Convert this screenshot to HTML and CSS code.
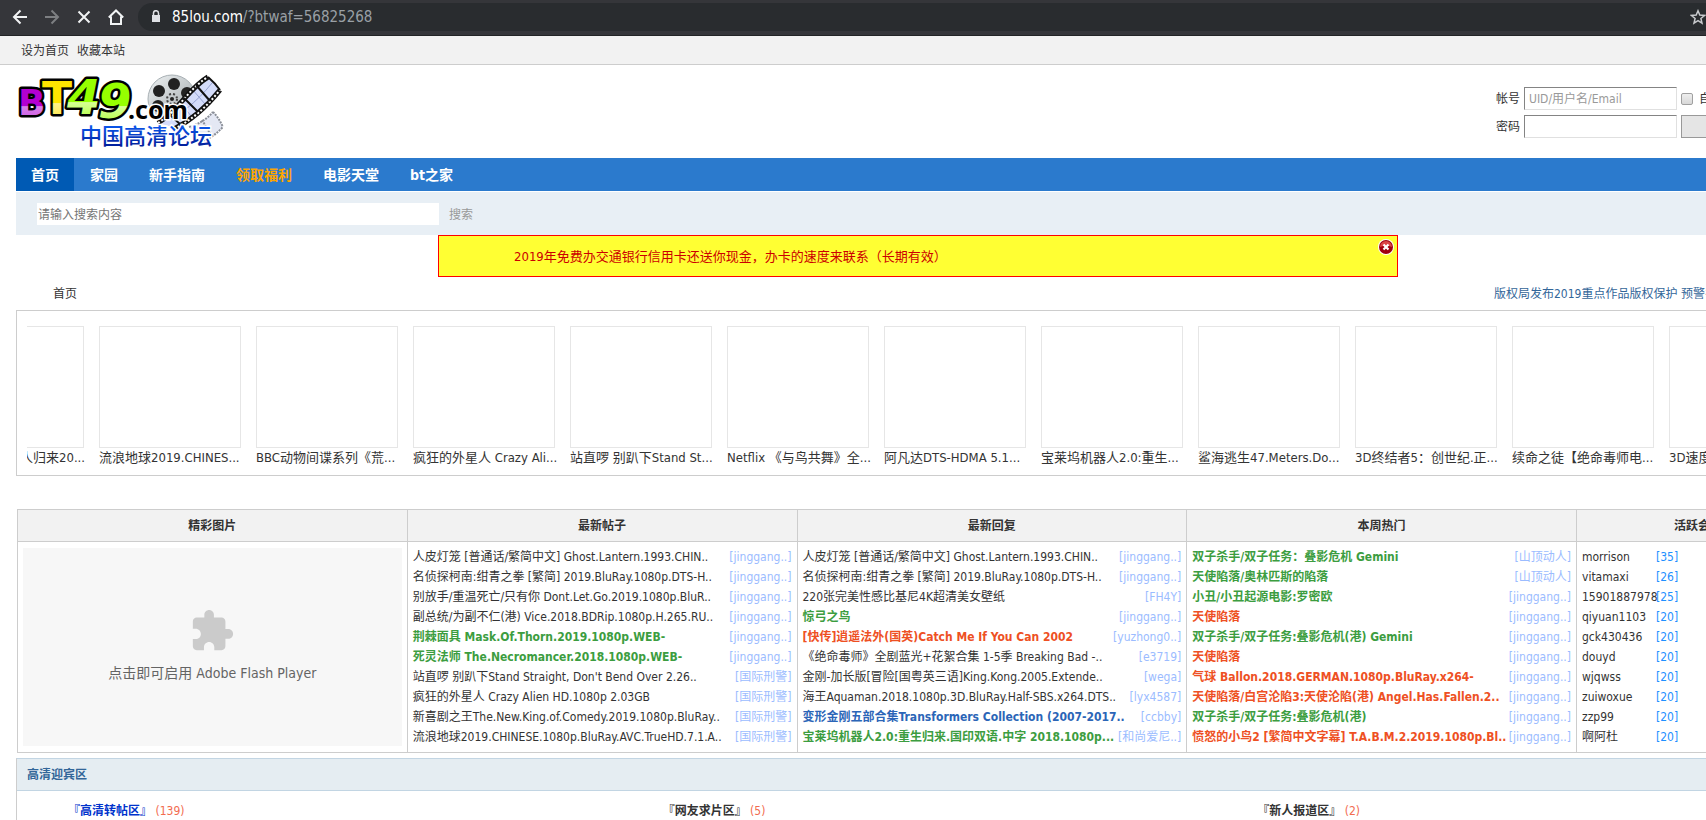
FILE: index.html
```html
<!doctype html>
<html lang="zh-CN">
<head>
  <meta charset="utf-8">
  <meta name="viewport" content="width=device-width, initial-scale=1">
  <title>BT49 中国高清论坛</title>
  <link rel="stylesheet" href="styles.css">
</head>
<body>

<div class="browser">
  <button class="browser-btn" aria-label="后退">
    <svg width="16" height="16" viewBox="0 0 16 16"><path d="M15 8H2M8.500 1.500 2 8l6.500 6.500"/></svg>
  </button>
  <button class="browser-btn is-off" aria-label="前进">
    <svg width="16" height="16" viewBox="0 0 16 16"><path d="M1 8h13M7.500 1.500 14 8l-6.500 6.500"/></svg>
  </button>
  <button class="browser-btn" aria-label="停止">
    <svg width="16" height="16" viewBox="0 0 16 16"><path d="M2.500 2.500l11 11M13.500 2.500l-11 11"/></svg>
  </button>
  <button class="browser-btn" aria-label="主页">
    <svg width="16" height="16" viewBox="0 0 16 16"><path d="M.8 8.500 8 1.500l7.200 7M3 7.500V15h10V7.500"/></svg>
  </button>
  <div class="address">
    <svg class="lock" width="10" height="13" viewBox="0 0 10 13"><path d="M1 5h8v7H1z"/><path class="lock-bow" d="M2.500 5V3.200a2.500 2.500 0 0 1 5 0V5"/></svg>
    <span class="address-host">85lou.com</span><span class="address-path">/?btwaf=56825268</span>
    <button class="star" aria-label="收藏">
      <svg width="16" height="16" viewBox="0 0 16 16"><path d="M8 1.800l1.800 4.300 4.700.4-3.600 3 1.100 4.600L8 11.700l-4 2.400 1.100-4.600-3.600-3 4.700-.4z"/></svg>
    </button>
  </div>
</div>

<div class="page">

  <div class="toptb">
    <a href="#">设为首页</a>
    <a href="#">收藏本站</a>
  </div>

  <div class="wp">

    <div class="hdc">
      <a href="#" class="logo" aria-label="BT49.com 中国高清论坛">
        <svg width="214" height="78" viewBox="0 0 214 78">
          <defs>
            <linearGradient id="gp" x1="0" y1="0" x2="0" y2="1"><stop offset=".58" stop-color="#b400d2"/><stop offset=".6" stop-color="#d880ea"/><stop offset="1" stop-color="#c850e0"/></linearGradient>
            <linearGradient id="gy" x1="0" y1="0" x2="0" y2="1"><stop offset=".58" stop-color="#ffe400"/><stop offset=".6" stop-color="#fff28c"/><stop offset="1" stop-color="#ffe632"/></linearGradient>
            <linearGradient id="gg" x1="0" y1="0" x2="0" y2="1"><stop offset=".58" stop-color="#96ff00"/><stop offset=".6" stop-color="#d8ff96"/><stop offset="1" stop-color="#a4ff28"/></linearGradient>
            <linearGradient id="gb" x1="0" y1="0" x2="0" y2="1"><stop offset=".2" stop-color="#0a5af0"/><stop offset="1" stop-color="#00148c"/></linearGradient>
            <linearGradient id="reel" x1="0" y1="0" x2="1" y2="1"><stop offset="0" stop-color="#f0f3f4"/><stop offset="1" stop-color="#98a0a4"/></linearGradient>
          </defs>
          <circle cx="156" cy="28" r="24" fill="url(#reel)" stroke="#a8b0b4"/>
          <g fill="#222">
            <circle cx="158" cy="13" r="6"/><circle cx="143" cy="20" r="6"/><circle cx="142" cy="35" r="6"/><circle cx="171" cy="22" r="6"/><circle cx="155" cy="43" r="6"/><circle cx="156" cy="28" r="2"/>
          </g>
          <circle cx="156" cy="28" r="5" fill="none" stroke="#444" stroke-width="2" stroke-dasharray="2 2"/>
          <path d="M142 52C164 38 172 18 192 6q7 6 11 14c-10 14-24 27-43 37z" fill="#d4dcfa"/>
          <path d="M164 31l11 14M176 18l13 15M170 38c10-8 18-16 26-26" fill="none" stroke="#98a4d4"/>
          <path d="M142 52C164 38 172 18 192 6M158 58c20-10 34-24 46-39" fill="none" stroke="#111" stroke-width="5"/>
          <path d="M142 52C164 38 172 18 192 6M158 58c20-10 34-24 46-39" fill="none" stroke="#fff" stroke-width="2" stroke-dasharray="2 2"/>
          <path d="M154 44l11 10M168 27l14 14M180 14l14 16M192 6q7 6 12 13" fill="none" stroke="#111" stroke-width="2"/>
          <path d="M173 56c10-3 18-8 24-15q6 6 10 15c-6 6-13 12-22 15z" fill="#e4e8f4"/>
          <path d="M173 56c10-3 18-8 24-15M185 71c9-3 16-9 22-15M197 41q6 6 10 15M186 49l9 15" fill="none" stroke="#8a8f98" stroke-width="2" stroke-dasharray="2 1"/>
          <g class="logo-bt">
            <text x="2" y="44" font-size="36" fill="url(#gp)">B</text>
            <text x="26" y="43" font-size="44" fill="url(#gy)">T</text>
            <g class="logo-num">
              <text x="51" y="43" font-size="48" fill="url(#gg)">4</text>
              <text x="82" y="47" font-size="48" fill="url(#gg)">9</text>
            </g>
          </g>
          <text class="logo-com" x="112" y="48">.com</text>
          <text class="logo-cn" x="64" y="73">中国高清论坛</text>
        </svg>
      </a>

      <form class="login">
        <label for="ls_username">帐号</label>
        <input type="text" id="ls_username" class="px" placeholder="UID/用户名/Email">
        <div class="login-extra">
          <input type="checkbox" id="ls_cookie" class="pc"><label for="ls_cookie">自动登录</label>
        </div>
        <label for="ls_password">密码</label>
        <input type="password" id="ls_password" class="px">
        <button type="button" class="pn">登录</button>
      </form>
    </div>

    <nav class="nv">
      <a href="#" class="a">首页</a>
      <a href="#">家园</a>
      <a href="#">新手指南</a>
      <a href="#" class="hot">领取福利</a>
      <a href="#">电影天堂</a>
      <a href="#">bt之家</a>
    </nav>

    <form class="scbar">
      <input type="text" class="scbar-txt" placeholder="请输入搜索内容" aria-label="搜索内容">
      <button type="button" class="scbar-btn">搜索</button>
    </form>

    <div class="notice">
      <a href="#">2019年免费办交通银行信用卡还送你现金，办卡的速度来联系（长期有效）</a>
      <button class="notice-close" aria-label="关闭">
        <svg width="16" height="16" viewBox="0 0 16 16">
          <circle cx="8" cy="8" r="8" fill="#fff"/>
          <circle cx="8" cy="8" r="7" fill="#a00010"/>
          <path d="M2 8a6 6 0 0 1 12 0q-6-3-12 0z" fill="#dc4646"/>
          <path d="M5.500 5.500l5 5M10.500 5.500l-5 5" stroke="#fff" stroke-width="2.200"/>
        </svg>
      </button>
    </div>

    <div class="pt">
      <a href="#">首页</a>
      <a href="#" class="pt-news">版权局发布2019重点作品版权保护 预警名单</a>
    </div>

    <div class="slide">
      <ul class="slide-list">
        <li><a href="#"><i class="pic"></i>齐天大圣之大人归来20...</a></li>
        <li><a href="#"><i class="pic"></i>流浪地球2019.CHINES...</a></li>
        <li><a href="#"><i class="pic"></i>BBC动物间谍系列《荒...</a></li>
        <li><a href="#"><i class="pic"></i>疯狂的外星人 Crazy Ali...</a></li>
        <li><a href="#"><i class="pic"></i>站直啰 别趴下Stand St...</a></li>
        <li><a href="#"><i class="pic"></i>Netflix 《与鸟共舞》全...</a></li>
        <li><a href="#"><i class="pic"></i>阿凡达DTS-HDMA 5.1...</a></li>
        <li><a href="#"><i class="pic"></i>宝莱坞机器人2.0:重生...</a></li>
        <li><a href="#"><i class="pic"></i>鲨海逃生47.Meters.Do...</a></li>
        <li><a href="#"><i class="pic"></i>3D终结者5：创世纪.正...</a></li>
        <li><a href="#"><i class="pic"></i>续命之徒【绝命毒师电...</a></li>
        <li><a href="#"><i class="pic"></i>3D速度与激情...</a></li>
      </ul>
    </div>

    <table class="board">
      <thead>
        <tr>
          <th>精彩图片</th>
          <th>最新帖子</th>
          <th>最新回复</th>
          <th>本周热门</th>
          <th class="board-last">活跃会员</th>
        </tr>
      </thead>
      <tbody>
        <tr>
          <td>
            <button class="flash">
              <svg width="46" height="46" viewBox="0 0 24 24"><path d="M20.500 11H19V7c0-1.100-.9-2-2-2h-4V3.500C13 2.120 11.880 1 10.500 1S8 2.120 8 3.500V5H4c-1.100 0-1.990.9-1.990 2v3.800H3.500c1.490 0 2.700 1.210 2.700 2.700s-1.210 2.700-2.700 2.700H2V20c0 1.100.9 2 2 2h3.800v-1.500c0-1.490 1.210-2.700 2.700-2.700s2.700 1.210 2.700 2.700V22H17c1.100 0 2-.9 2-2v-4h1.500c1.380 0 2.500-1.120 2.500-2.500S21.880 11 20.500 11z"/></svg>
              <span>点击即可启用 Adobe Flash Player</span>
            </button>
          </td>
          <td>
            <ul class="posts">
              <li><a href="#">人皮灯笼 [普通话/繁简中文] Ghost.Lantern.1993.CHIN..</a><a href="#" class="by">[jinggang..]</a></li>
              <li><a href="#">名侦探柯南:绀青之拳 [繁简] 2019.BluRay.1080p.DTS-H..</a><a href="#" class="by">[jinggang..]</a></li>
              <li><a href="#">别放手/重温死亡/只有你 Dont.Let.Go.2019.1080p.BluR..</a><a href="#" class="by">[jinggang..]</a></li>
              <li><a href="#">副总统/为副不仁(港) Vice.2018.BDRip.1080p.H.265.RU..</a><a href="#" class="by">[jinggang..]</a></li>
              <li><a href="#" class="green">荆棘面具 Mask.Of.Thorn.2019.1080p.WEB-</a><a href="#" class="by">[jinggang..]</a></li>
              <li><a href="#" class="green">死灵法师 The.Necromancer.2018.1080p.WEB-</a><a href="#" class="by">[jinggang..]</a></li>
              <li><a href="#">站直啰 别趴下Stand Straight, Don't Bend Over 2.26..</a><a href="#" class="by">[国际刑警]</a></li>
              <li><a href="#">疯狂的外星人 Crazy Alien HD.1080p 2.03GB</a><a href="#" class="by">[国际刑警]</a></li>
              <li><a href="#">新喜剧之王The.New.King.of.Comedy.2019.1080p.BluRay..</a><a href="#" class="by">[国际刑警]</a></li>
              <li><a href="#">流浪地球2019.CHINESE.1080p.BluRay.AVC.TrueHD.7.1.A..</a><a href="#" class="by">[国际刑警]</a></li>
            </ul>
          </td>
          <td>
            <ul class="posts">
              <li><a href="#">人皮灯笼 [普通话/繁简中文] Ghost.Lantern.1993.CHIN..</a><a href="#" class="by">[jinggang..]</a></li>
              <li><a href="#">名侦探柯南:绀青之拳 [繁简] 2019.BluRay.1080p.DTS-H..</a><a href="#" class="by">[jinggang..]</a></li>
              <li><a href="#">220张完美性感比基尼4K超清美女壁纸</a><a href="#" class="by">[FH4Y]</a></li>
              <li><a href="#" class="green">惊弓之鸟</a><a href="#" class="by">[jinggang..]</a></li>
              <li><a href="#" class="red">[快传]逍遥法外(国英)Catch Me If You Can 2002</a><a href="#" class="by">[yuzhong0..]</a></li>
              <li><a href="#">《绝命毒师》全剧蓝光+花絮合集 1-5季 Breaking Bad -..</a><a href="#" class="by">[e3719]</a></li>
              <li><a href="#">金刚-加长版[冒险[国粤英三语]King.Kong.2005.Extende..</a><a href="#" class="by">[wega]</a></li>
              <li><a href="#">海王Aquaman.2018.1080p.3D.BluRay.Half-SBS.x264.DTS..</a><a href="#" class="by">[lyx4587]</a></li>
              <li><a href="#" class="blue">变形金刚五部合集Transformers Collection (2007-2017..</a><a href="#" class="by">[ccbby]</a></li>
              <li><a href="#" class="green">宝莱坞机器人2.0:重生归来.国印双语.中字 2018.1080p...</a><a href="#" class="by">[和尚爱尼..]</a></li>
            </ul>
          </td>
          <td>
            <ul class="posts">
              <li><a href="#" class="green">双子杀手/双子任务：叠影危机 Gemini</a><a href="#" class="by">[山顶动人]</a></li>
              <li><a href="#" class="green">天使陷落/奥林匹斯的陷落</a><a href="#" class="by">[山顶动人]</a></li>
              <li><a href="#" class="green">小丑/小丑起源电影:罗密欧</a><a href="#" class="by">[jinggang..]</a></li>
              <li><a href="#" class="red">天使陷落</a><a href="#" class="by">[jinggang..]</a></li>
              <li><a href="#" class="green">双子杀手/双子任务:叠影危机(港) Gemini</a><a href="#" class="by">[jinggang..]</a></li>
              <li><a href="#" class="red">天使陷落</a><a href="#" class="by">[jinggang..]</a></li>
              <li><a href="#" class="red">气球 Ballon.2018.GERMAN.1080p.BluRay.x264-</a><a href="#" class="by">[jinggang..]</a></li>
              <li><a href="#" class="red">天使陷落/白宫沦陷3:天使沦陷(港) Angel.Has.Fallen.2..</a><a href="#" class="by">[jinggang..]</a></li>
              <li><a href="#" class="green">双子杀手/双子任务:叠影危机(港)</a><a href="#" class="by">[jinggang..]</a></li>
              <li><a href="#" class="red">愤怒的小鸟2 [繁简中文字幕] T.A.B.M.2.2019.1080p.Bl..</a><a href="#" class="by">[jinggang..]</a></li>
            </ul>
          </td>
          <td>
            <ul class="members">
              <li><a href="#">morrison</a><em>[35]</em></li>
              <li><a href="#">vitamaxi</a><em>[26]</em></li>
              <li><a href="#">15901887978</a><em>[25]</em></li>
              <li><a href="#">qiyuan1103</a><em>[20]</em></li>
              <li><a href="#">gck430436</a><em>[20]</em></li>
              <li><a href="#">douyd</a><em>[20]</em></li>
              <li><a href="#">wjqwss</a><em>[20]</em></li>
              <li><a href="#">zuiwoxue</a><em>[20]</em></li>
              <li><a href="#">zzp99</a><em>[20]</em></li>
              <li><a href="#">啊阿杜</a><em>[20]</em></li>
            </ul>
          </td>
        </tr>
      </tbody>
    </table>

    <div class="bm">
      <h2 class="bm-h"><a href="#">高清迎宾区</a></h2>
      <div class="bm-c">
        <div class="forum"><a href="#" class="forum-new">『高清转帖区』</a> <em>(139)</em></div>
        <div class="forum"><a href="#">『网友求片区』</a> <em>(5)</em></div>
        <div class="forum"><a href="#">『新人报道区』</a> <em>(2)</em></div>
      </div>
    </div>

  </div>
</div>

</body>
</html>
```
FILE: styles.css
```css
* {
  box-sizing: border-box;
}

html, body {
  margin: 0;
  height: 100%;
  overflow: hidden;
}

body, input, button {
  font: 12px/20px "DejaVu Sans Condensed", "Noto Sans CJK SC", sans-serif;
  color: #333;
}

body {
  background: #fff;
}

a {
  color: #333;
  text-decoration: none;
}

ul, h2 {
  list-style: none;
  margin: 0;
  padding: 0;
}

em, i {
  font-style: normal;
}

button {
  border: 0;
  padding: 0;
  background: none;
  cursor: pointer;
}

/* browser bar */

.browser {
  display: flex;
  align-items: center;
  gap: 16px;
  height: 36px;
  padding: 0 0 2px 12px;
  background: #35363a;
  border-bottom: 1px solid #222426;
}

.browser-btn {
  width: 16px;
  height: 16px;
}

.browser svg {
  display: block;
  fill: none;
  stroke: #f1f3f4;
  stroke-width: 2;
}

.browser .is-off svg {
  stroke: #7d7f82;
}

.address {
  flex: 1;
  display: flex;
  align-items: center;
  height: 28px;
  margin-left: -2px;
  padding-left: 13px;
  background: #292c2f;
  border-radius: 14px 0 0 14px;
  font-size: 15px;
  line-height: 28px;
}

.address .lock {
  margin-right: 11px;
  fill: #dfe1e5;
  stroke: none;
}

.lock .lock-bow {
  fill: none;
  stroke: #dfe1e5;
  stroke-width: 1.5;
}

.address-host { color: #fff; }

.address-path { color: #9aa0a6; }

.star {
  margin-left: auto;
}

.star svg {
  stroke: #c8cacd;
  stroke-width: 1.5;
}

/* the forum runs past the right edge of the window */

.page {
  width: calc(100% + 130px);
}

.toptb {
  display: flex;
  gap: 8px;
  padding: 5px 21px 3px;
  background: #f2f2f2;
  border-bottom: 1px solid #cdcdcd;
}

.wp {
  margin: 0 16px;
}

/* header */

.hdc {
  display: flex;
  justify-content: space-between;
  align-items: flex-start;
  height: 93px;
}

.logo {
  padding-top: 6px;
}

.logo svg {
  display: block;
}

.logo-bt text {
  font-family: "DejaVu Sans", sans-serif;
  font-weight: bold;
  stroke: #000;
  stroke-width: 5;
  stroke-linejoin: round;
  paint-order: stroke;
}

.logo-num text {
  font-style: italic;
}

.logo-com {
  font: bold 25px "Noto Sans", sans-serif;
  stroke: #fff;
  stroke-width: 3;
  paint-order: stroke;
}

.logo-cn {
  font: 500 22px "Noto Sans CJK SC", sans-serif;
  fill: url(#gb);
  stroke: #fff;
  stroke-width: 3;
  paint-order: stroke;
}

.login {
  display: grid;
  grid-template-columns: 24px 153px 1fr;
  gap: 5px 4px;
  align-items: center;
  width: 324px;
  padding-top: 22px;
}

.login label {
  padding-top: 1px;
}

.px {
  width: 100%;
  height: 23px;
  padding: 0 4px;
  background: #fff;
  border: 1px solid;
  border-color: #848484 #e0e0e0 #e0e0e0 #848484;
}

.px::placeholder {
  color: #999;
}

.login-extra {
  display: flex;
  align-items: center;
  gap: 6px;
}

.pc {
  appearance: none;
  width: 12px;
  height: 12px;
  margin: 0;
  border: 1px solid #a0a0a0;
  border-radius: 2px;
  background: linear-gradient(#eee, #d8d8d8);
}

.pn {
  width: 75px;
  height: 23px;
  background: #e5e5e5;
  border: 1px solid #999;
}

/* nav */

.nv {
  display: flex;
  gap: 1px;
  height: 33px;
  background: #2b7acd;
}

.nv a {
  padding: 0 15px;
  color: #fff;
  font-size: 14px;
  font-weight: bold;
  line-height: 34px;
}

.nv .a {
  background: #005ab4;
}

.nv .hot {
  color: #ffa500;
}

.scbar {
  display: flex;
  align-items: center;
  gap: 10px;
  height: 43px;
  margin-top: 1px;
  padding-left: 21px;
  background: #e8eff5;
}

.scbar-txt {
  width: 402px;
  height: 22px;
  padding: 2px 1px 0;
  border: 0;
}

.scbar-txt::placeholder {
  color: #757575;
}

.scbar-btn {
  padding-top: 2px;
  color: #999;
}

.notice {
  position: relative;
  width: 960px;
  margin: 0 auto;
  padding: 11px 75px 9px;
  background: #ff3;
  border: 1px solid #f00;
  font-size: 13px;
}

.notice a {
  color: #c00;
}

.notice-close {
  position: absolute;
  top: 3px;
  right: 3px;
  width: 16px;
  height: 16px;
}

.notice-close svg {
  display: block;
}

.pt {
  display: flex;
  justify-content: space-between;
  padding: 7px 0 6px 37px;
}

.pt-news {
  width: 326px;
  color: #369;
}

/* picture strip */

.slide {
  padding: 15px 10px 7px;
  border: 1px solid #cdcdcd;
}

.slide-list {
  display: flex;
  gap: 15px;
  overflow: hidden;
}

.slide-list li {
  flex: none;
  width: 142px;
  font-size: 13px;
  line-height: 20px;
  white-space: nowrap;
}

/* scrolled part of the way */
.slide-list li:first-child {
  margin-left: -85px;
}

.pic {
  display: block;
  height: 122px;
  border: 1px solid #e6e6e6;
}

/* four lists and the members */

.board {
  width: calc(100% - 1px);
  margin: 33px 0 5px 1px;
  border-collapse: collapse;
  table-layout: fixed;
}

.board th, .board td {
  padding: 0;
  border: 1px solid #cdcdcd;
}

.board th {
  height: 32px;
  background: #f2f2f2;
}

.board-last {
  width: 243px;
}

.board td {
  padding: 5px;
  vertical-align: top;
}

.flash {
  display: flex;
  flex-direction: column;
  align-items: center;
  justify-content: center;
  gap: 9px;
  width: 100%;
  height: 198px;
  margin-top: 1px;
  padding-bottom: 4px;
  background: #f7f7f7;
  color: #646464;
  font-size: 14px;
}

.flash svg {
  fill: #cbcbcb;
}

.posts li {
  display: flex;
  justify-content: space-between;
  white-space: nowrap;
}

.posts .by {
  color: #9bbcff;
}

.green, .red, .blue {
  font-weight: bold;
}

.posts .green { color: #3c9d40; }

.posts .red { color: #ee5023; }

.posts .blue { color: #2b65b7; }

.members li {
  display: flex;
}

.members a {
  width: 74px;
}

.members em {
  color: #1e90ff;
}

.bm {
  border: 1px solid #cdcdcd;
  border-top-color: #c2d5e3;
}

.bm-h {
  padding: 6px 10px 5px;
  background: #e5edf2;
  border-bottom: 1px solid #c2d5e3;
  font-size: 12px;
}

.bm-h a {
  color: #369;
}

.bm-c {
  display: grid;
  grid-template-columns: 33% 33% 33%;
  padding: 10px 0;
}

.forum {
  padding-left: 51px;
}

.forum a {
  font-weight: bold;
}

.forum .forum-new {
  color: #0033cc;
}

.forum em {
  color: #f26c4f;
}
```
